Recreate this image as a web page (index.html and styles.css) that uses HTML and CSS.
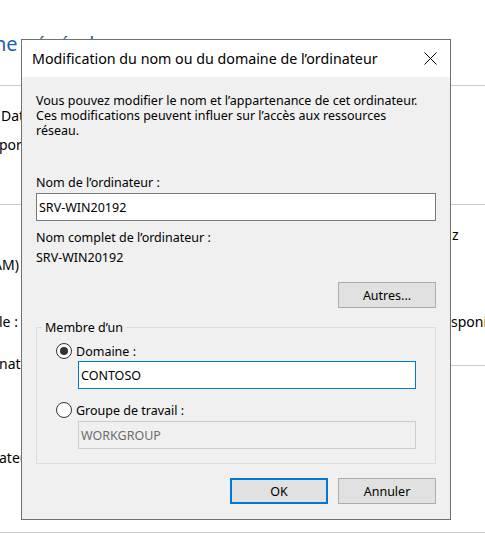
FILE: index.html
```html
<!DOCTYPE html>
<html lang="fr">
<head>
<meta charset="utf-8">
<title>Modification du nom ou du domaine de l’ordinateur</title>
<link rel="stylesheet" href="styles.css">
</head>
<body>
<div class="bg">
  <div class="bg-head"><h1 class="bg-title">ne générale</h1></div>
  <div class="bg-sec1">
    <p class="bg-text bg-dat">Date d’installation</p>
    <p class="bg-text bg-pora">poraire</p>
  </div>
  <div class="bg-sec2">
    <div class="bg-left">
      <p class="bg-text bg-ram">AM)</p>
      <p class="bg-text bg-le">le :</p>
      <p class="bg-text bg-nat">nateur</p>
      <p class="bg-text bg-ateu">ateur</p>
    </div>
    <div class="bg-right">
      <div class="bg-right-block">
        <p class="bg-text bg-ghz">z</p>
        <p class="bg-text bg-dispo">sponible</p>
      </div>
    </div>
  </div>
</div>

<div class="dialog">
  <div class="titlebar">
    <span class="title">Modification du nom ou du domaine de l’ordinateur</span>
    <svg class="close" width="13" height="13" viewBox="0 0 13 13"><path d="M0.5 0.5 L12.5 12.5 M12.5 0.5 L0.5 12.5" stroke="#000" stroke-width="1" fill="none"/></svg>
  </div>
  <div class="body">
    <p class="desc">Vous pouvez modifier le nom et l’appartenance de cet ordinateur.<br>Ces modifications peuvent influer sur l’accès aux ressources<br>réseau.</p>
    <p class="label label-name">Nom de l’ordinateur :</p>
    <div class="field">SRV-WIN20192</div>
    <p class="label label-full">Nom complet de l’ordinateur :</p>
    <p class="label label-value">SRV-WIN20192</p>
    <div class="btn btn-more">Autres...</div>
    <fieldset class="group">
      <legend class="legend">Membre d’un</legend>
      <div class="group-inner">
        <div class="radio-row radio-row-first">
          <span class="radio radio-checked"></span>
          <span class="radio-label">Domaine :</span>
        </div>
        <div class="field field-sub field-focus">CONTOSO</div>
        <div class="radio-row radio-row-second">
          <span class="radio"></span>
          <span class="radio-label">Groupe de travail :</span>
        </div>
        <div class="field field-sub field-disabled">WORKGROUP</div>
      </div>
    </fieldset>
    <div class="actions">
      <div class="btn btn-default">OK</div>
      <div class="btn">Annuler</div>
    </div>
  </div>
</div>
</body>
</html>
```

FILE: styles.css
```css
html, body {
  margin: 0;
  padding: 0;
}
body {
  width: 485px;
  height: 549px;
  overflow: hidden;
  background: #ffffff;
  font-family: "Noto Sans", "Open Sans", sans-serif;
  position: relative;
}
p { margin: 0; }

/* background settings page */
.bg {
  width: 485px;
  position: relative;
  z-index: 0;
}
.bg-head {
  height: 86px;
  border-bottom: 1px solid #cccccc;
  box-sizing: border-box;
}
.bg-title {
  margin: 0 0 0 -6px;
  padding-top: 30px;
  font-weight: normal;
  font-size: 20px;
  line-height: 28px;
  color: #1f5fae;
  white-space: nowrap;
}
.bg-text {
  font-size: 14px;
  line-height: 20px;
  color: #000;
  white-space: nowrap;
}
.bg-sec1 {
  height: 119px;
  box-sizing: border-box;
  border-bottom: 1px solid #cccccc;
  padding-top: 20px;
}
.bg-dat { padding-left: 1px; }
.bg-pora { margin-top: 9px; margin-left: -1px; }
.bg-sec2 {
  display: grid;
  grid-template-columns: 451px 1fr;
  height: 328px;
  box-sizing: border-box;
  border-bottom: 1px solid #cccccc;
}
.bg-ram { margin-top: 50px; margin-left: -7px; }
.bg-le { margin-top: 37px; margin-left: -1px; }
.bg-nat { margin-top: 22px; margin-left: -1px; }
.bg-ateu { margin-top: 74px; margin-left: -1px; }
.bg-right-block {
  height: 161px;
  box-sizing: border-box;
  border-bottom: 1px solid #cccccc;
  padding-top: 20px;
}
.bg-ghz { padding-left: 1px; }
.bg-dispo { margin-top: 67px; }

/* dialog */
.dialog {
  position: absolute;
  z-index: 2;
  left: 21px;
  top: 39px;
  width: 430px;
  height: 481px;
  box-sizing: border-box;
  border: 1px solid #707070;
  background: #f0f0f0;
  display: flex;
  flex-direction: column;
}
.titlebar {
  height: 37px;
  flex: none;
  background: #ffffff;
  display: flex;
  align-items: center;
  justify-content: space-between;
  padding: 0 13px 0 10px;
}
.title {
  font-family: "Noto Sans", "Open Sans", sans-serif;
  font-size: 14.25px;
  color: #000;
  white-space: nowrap;
}
.close { display: block; }

.body {
  padding: 16px 14px 15px;
  display: flex;
  flex-direction: column;
  font-family: "Noto Sans", "Open Sans", sans-serif;
  font-size: 12.5px;
  line-height: 15px;
  color: #000;
}
.desc { white-space: nowrap; }
.label-name { margin-top: 37px; }
.field {
  margin-top: 3px;
  height: 28px;
  box-sizing: border-box;
  border: 1px solid #7a7a7a;
  background: #ffffff;
  padding-left: 2px;
  display: flex;
  align-items: center;
}
.label-full { margin-top: 9px; }
.label-value { margin-top: 5px; }

.btn {
  width: 98px;
  height: 26px;
  box-sizing: border-box;
  border: 1px solid #adadad;
  background: #e1e1e1;
  display: flex;
  align-items: center;
  justify-content: center;
}
.btn-more {
  align-self: flex-end;
  margin-top: 17px;
}
.btn-default {
  border: 2px solid #0078d7;
}

.group {
  margin: 12px 0 0;
  padding: 0;
  border: 1px solid #dcdcdc;
  min-width: 0;
}
.legend {
  margin-left: 5px;
  padding: 0 3px;
  line-height: 15px;
}
.group-inner {
  padding: 0 0 14px 19px;
}
.radio-row {
  display: flex;
  align-items: center;
  height: 16px;
}
.radio-row-first { margin-top: 8px; }
.radio-row-second { margin-top: 13px; }
.radio {
  width: 16px;
  height: 16px;
  box-sizing: border-box;
  border: 1px solid #333333;
  border-radius: 50%;
  background: #ffffff;
  display: flex;
  align-items: center;
  justify-content: center;
}
.radio-checked::after {
  content: "";
  width: 8px;
  height: 8px;
  border-radius: 50%;
  background: #333333;
}
.radio-label { margin-left: 4px; }
.field-sub {
  margin-left: 22px;
  width: 338px;
  padding-left: 2px;
}
.field-focus {
  margin-top: 2px;
  border-color: #0078d7;
}
.field-disabled {
  margin-top: 3px;
  border-color: #cccccc;
  background: #f0f0f0;
  color: #6d6d6d;
}
.actions {
  margin-top: 14px;
  display: flex;
  justify-content: flex-end;
  gap: 10px;
}
```
